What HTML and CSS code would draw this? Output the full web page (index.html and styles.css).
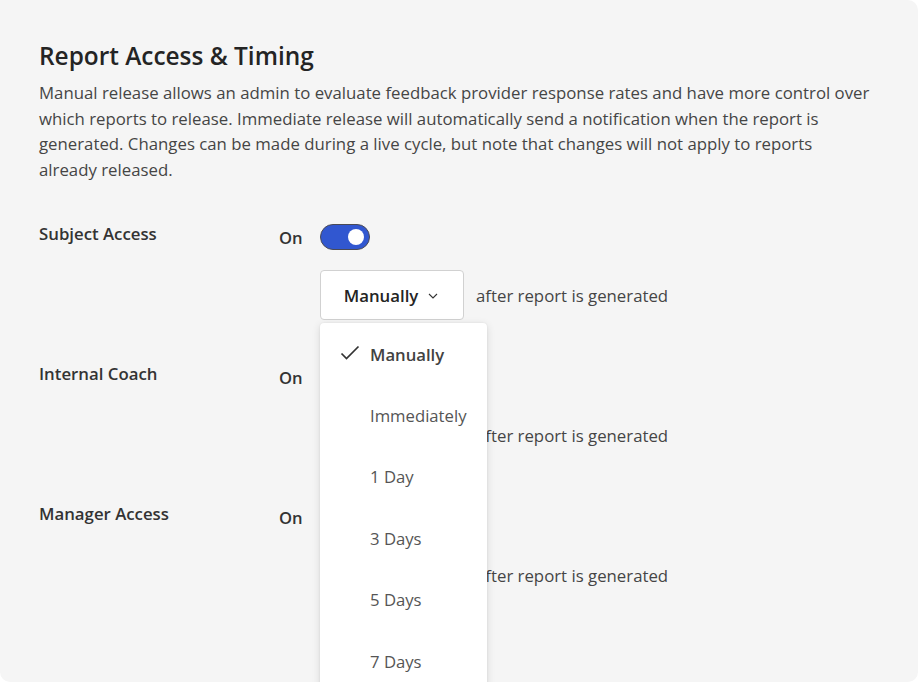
FILE: index.html
```html
<!DOCTYPE html>
<html lang="en">
<head>
<meta charset="utf-8">
<title>Report Access &amp; Timing</title>
<link rel="stylesheet" href="styles.css">
</head>
<body>
<main class="card">
  <h1 class="title">Report Access &amp; Timing</h1>
  <p class="desc">Manual release allows an admin to evaluate feedback provider response rates and have more control over which reports to release. Immediate release will automatically send a notification when the report is generated. Changes can be made during a live cycle, but note that changes will not apply to reports already released.</p>

  <div class="settings">
    <section class="setting">
      <div class="label">Subject Access</div>
      <div class="state">On</div>
      <div class="toggle on"><span class="knob"></span></div>
      <div class="timing">
        <button class="select">Manually
          <svg class="chev" width="10" height="6" viewBox="0 0 10 6"><path d="M1 1l4 4 4-4" fill="none" stroke="#333" stroke-width="1.1"/></svg>
        </button>
        <span class="after">after report is generated</span>
        <ul class="menu">
          <li class="item selected">
            <svg class="check" width="20" height="16" viewBox="0 0 20 16"><path d="M1.5 8.5l5 5L18.5 1.5" fill="none" stroke="#333" stroke-width="1.7"/></svg>
            Manually</li>
          <li class="item">Immediately</li>
          <li class="item">1 Day</li>
          <li class="item">3 Days</li>
          <li class="item">5 Days</li>
          <li class="item">7 Days</li>
        </ul>
      </div>
    </section>

    <section class="setting">
      <div class="label">Internal Coach</div>
      <div class="state">On</div>
      <div class="toggle on"><span class="knob"></span></div>
      <div class="timing">
        <button class="select">Manually
          <svg class="chev" width="10" height="6" viewBox="0 0 10 6"><path d="M1 1l4 4 4-4" fill="none" stroke="#333" stroke-width="1.1"/></svg>
        </button>
        <span class="after">after report is generated</span>
      </div>
    </section>

    <section class="setting">
      <div class="label">Manager Access</div>
      <div class="state">On</div>
      <div class="toggle on"><span class="knob"></span></div>
      <div class="timing">
        <button class="select">Manually
          <svg class="chev" width="10" height="6" viewBox="0 0 10 6"><path d="M1 1l4 4 4-4" fill="none" stroke="#333" stroke-width="1.1"/></svg>
        </button>
        <span class="after">after report is generated</span>
      </div>
    </section>
  </div>
</main>
</body>
</html>
```

FILE: styles.css
```css
* { box-sizing: border-box; }
html, body { margin: 0; padding: 0; background: #ffffff; }
body {
  font-family: "Open Sans", "Noto Sans", sans-serif;
  color: #333;
  width: 922px;
  height: 684px;
  overflow: hidden;
}
.card {
  width: 918px;
  height: 682px;
  background: #f5f5f5;
  border-radius: 0 10px 10px 10px;
  padding: 38px 30px 0 39px;
  position: relative;
  overflow: hidden;
}
.title {
  margin: 0;
  font-size: 24.4px;
  font-weight: 600;
  line-height: 36px;
  color: #242424;
}
.desc {
  margin: 6px 0 0;
  font-size: 16.8px;
  line-height: 25.6px;
  color: #454545;
  max-width: 833px;
}
.settings {
  margin-top: 42px;
  display: flex;
  flex-direction: column;
  gap: 44px;
}
.setting {
  display: grid;
  grid-template-columns: 240px 41px 1fr;
  grid-template-rows: 26px auto;
  row-gap: 20px;
  align-items: center;
}
.label {
  font-size: 16.8px;
  font-weight: 600;
  color: #333;
  align-self: start;
  line-height: 22px;
  margin-top: -1px;
}
.state {
  font-size: 16.6px;
  font-weight: 600;
  color: #333;
  line-height: 22px;
  margin-top: 2px;
}
.toggle {
  width: 50px;
  height: 26px;
  border-radius: 13px;
  background: #3157d0;
  border: 1.5px solid #4a4a55;
  position: relative;
}
.knob {
  position: absolute;
  top: 4px;
  right: 5px;
  width: 16px;
  height: 16px;
  border-radius: 50%;
  background: #fff;
}
.timing {
  grid-column: 3;
  grid-row: 2;
  display: flex;
  align-items: center;
  position: relative;
}
.select {
  width: 144px;
  height: 50px;
  background: #fff;
  border: 1px solid #d1d1d1;
  border-radius: 4px;
  font-family: inherit;
  font-size: 16.8px;
  font-weight: 600;
  color: #242424;
  display: flex;
  align-items: center;
  justify-content: center;
  gap: 10px;
  padding: 0 2px 0 0;
}
.chev { display: block; margin-top: 1px; }
.after {
  margin-left: 12px;
  font-size: 16.8px;
  color: #454545;
}
.menu {
  position: absolute;
  top: 53px;
  left: 0;
  width: 167px;
  margin: 0;
  padding: 0;
  list-style: none;
  background: #fff;
  border-radius: 4px;
  box-shadow: 0 2px 8px rgba(0,0,0,0.12), 0 0 2px rgba(0,0,0,0.08);
  z-index: 2;
}
.item {
  height: 61.4px;
  display: flex;
  align-items: center;
  padding-left: 50px;
  font-size: 16.7px;
  color: #555;
  position: relative;
}
.item.selected {
  font-weight: 600;
  color: #424242;
}
.check {
  position: absolute;
  left: 20px;
  top: 22px;
}
```
